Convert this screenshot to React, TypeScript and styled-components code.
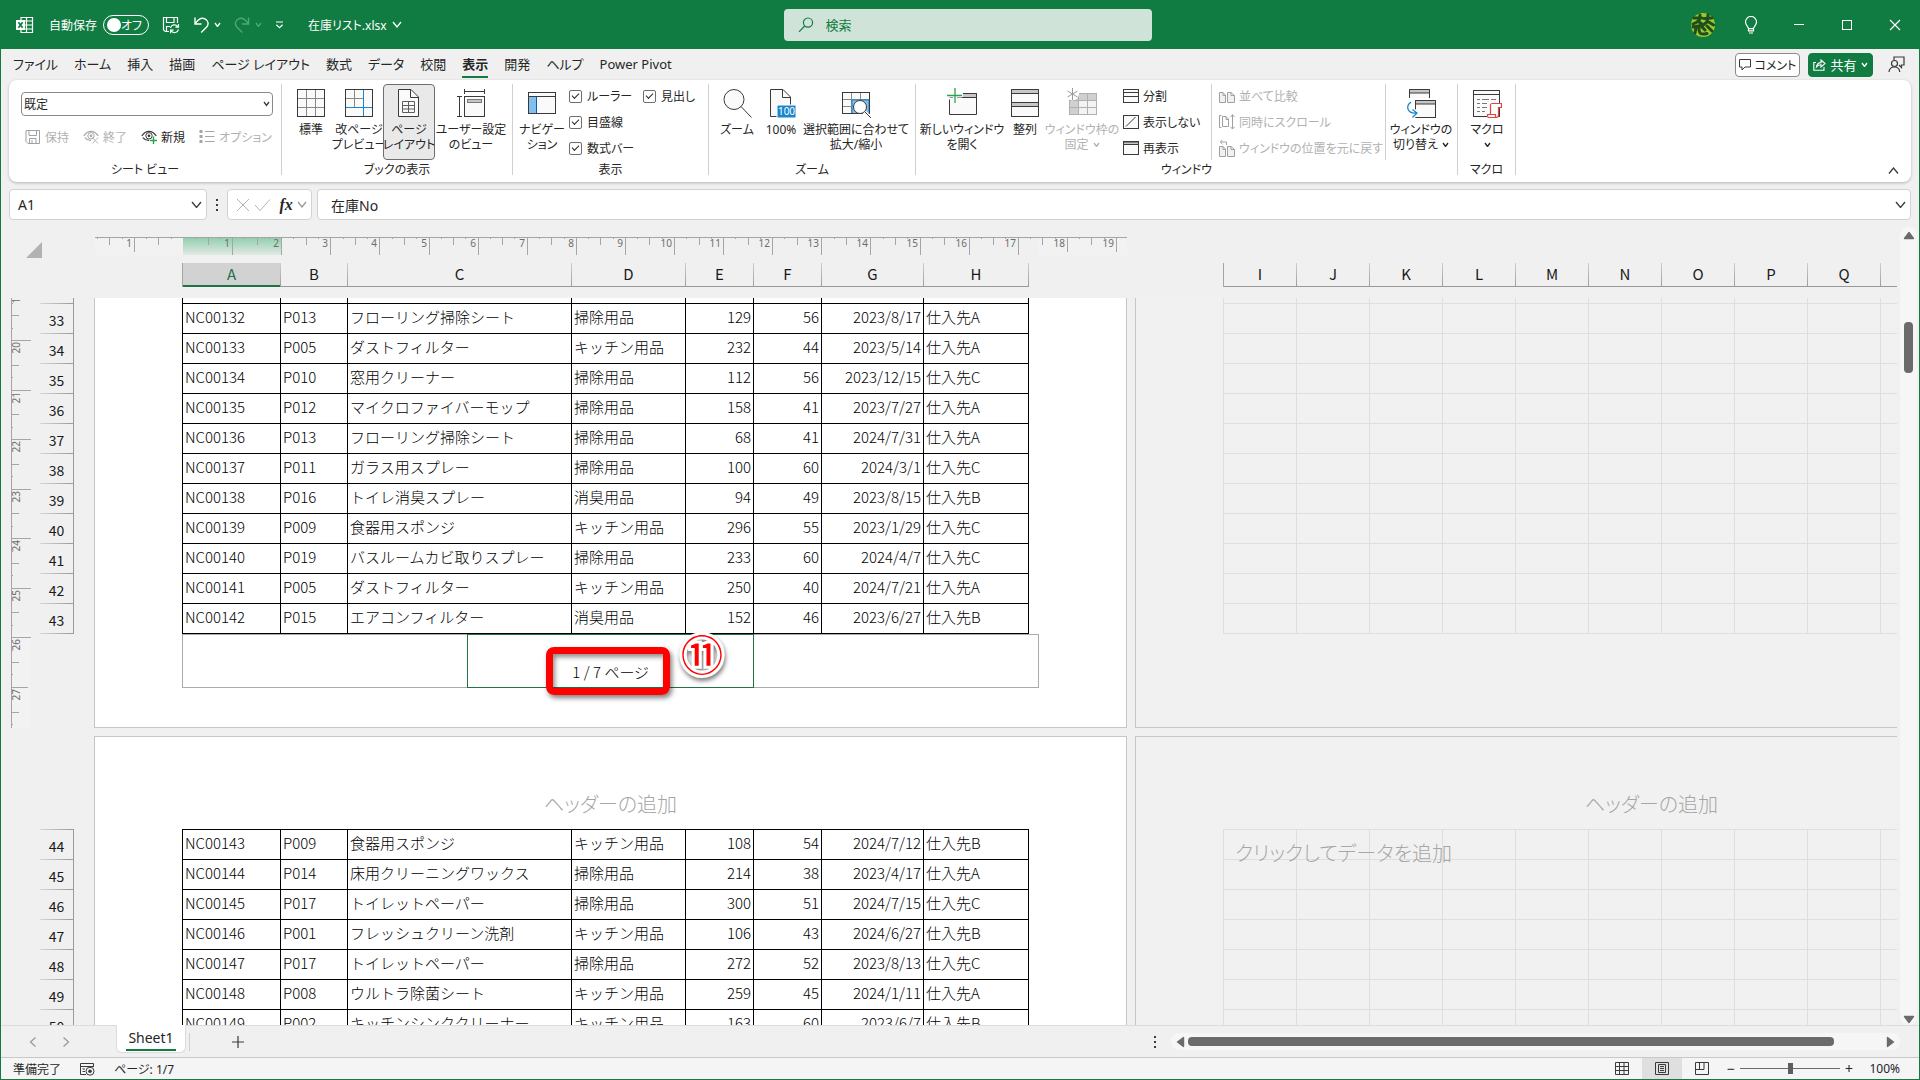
import React from "react";
import styled, { createGlobalStyle } from "styled-components";

const green = "#107c41";
const ink = "#262626";
const muted = "#b1b1b1";
const chrome = "#f0f0f0";
const uiFont = `"Noto Sans", "Noto Sans CJK JP", sans-serif`;
const cellFont = `"Noto Sans CJK JP", "Noto Sans", sans-serif`;

const GlobalStyle = createGlobalStyle`
  *, *::before, *::after { box-sizing: border-box; }
  body { margin: 0; background: ${chrome}; color: ${ink}; font-family: ${uiFont}; font-size: 12px; font-feature-settings: "palt"; }
  button, input, select { font: inherit; font-feature-settings: inherit; color: inherit; margin: 0; }
  button { border: 0; padding: 0; background: none; white-space: nowrap; }
  svg { display: block; flex: none; }
`;

/* ---------- drawings ---------- */

type DrawProps = { w?: number; h?: number; children: React.ReactNode; color?: string; sw?: number };
const Draw = ({ w = 30, h = 30, children, color = "#3a3a3a", sw = 1 }: DrawProps) => (
  <svg width={w} height={h} viewBox={`0 0 ${w} ${h}`} fill="none" stroke={color} strokeWidth={sw} aria-hidden="true">
    {children}
  </svg>
);

const Chevron = ({ w = 8, color = "#3a3a3a", up = false }: { w?: number; color?: string; up?: boolean }) => {
  const h = w / 2 + 2;
  return (
    <Draw w={w} h={h} color={color} sw={1.3}>
      <path d={up ? `M1 ${h - 1} L${w / 2} 1 L${w - 1} ${h - 1}` : `M1 1 L${w / 2} ${h - 1} L${w - 1} 1`} />
    </Draw>
  );
};

const ExcelLogo = () => (
  <Draw w={18} h={18} color="#fff" sw={1.2}>
    <path d="M5 5V1.5H16.5V16.5H5V13M10.5 1.5V16.5M5 5H16.5M9 9H16.5M5 13H16.5" />
    <path d="M0 4H9V14H0Z" fill="#fff" stroke="none" />
    <path d="M2.4 6.2L6.6 11.8M6.6 6.2L2.4 11.8" stroke={green} strokeWidth={1.7} />
  </Draw>
);
const SaveSync = () => (
  <Draw w={18} h={18} color="#fff" sw={1.2}>
    <path d="M7 15.5H3.2L1.5 13.8V1.5H15.5V7M4.5 1.5V6.5H12V1.5M4.5 15V10.5H8" />
    <path d="M8.5 12A4 4 0 0 1 15.7 10.6M16.5 8V11.2H13.4M16.5 13.4A4 4 0 0 1 9.4 15M8.6 17.2V14.2H11.6" />
  </Draw>
);
const Undo = () => (
  <Draw w={17} h={18} color="#fff" sw={1.4}>
    <path d="M2 1.5V8H8.5M2.3 7.6C5 3.6 8.8 1.3 12 2.9C16 5 15.8 9 13.2 11.6L8.2 16.6" />
  </Draw>
);
const Redo = () => (
  <Draw w={17} h={18} color="#4fa876" sw={1.4}>
    <path d="M14.5 1.5V8H8M14.2 7.6C11.5 3.6 7.7 1.3 4.5 2.9C.5 5 .7 9 3.3 11.6L8.3 16.6" />
  </Draw>
);
const Customize = () => (
  <Draw w={9} h={9} color="#fff" sw={1.2}>
    <path d="M1 2H8M1.4 4.8L4.5 7.6L7.6 4.8" />
  </Draw>
);
const SearchGlyph = () => (
  <Draw w={16} h={16} color={green} sw={1.2}>
    <circle cx="10" cy="5.6" r="4.6" />
    <path d="M6.7 9L1 14.8" />
  </Draw>
);
const Avatar = () => (
  <Draw w={24} h={24}>
    <circle cx="12" cy="12" r="12" fill="#9cc92b" stroke="none" />
    <path
      d="M3 5H11M9 2L8 8L2 11M7 8L12 12M13 5.5L21 5M17 2L16 9L11 13M16 8L22.5 12M2 14L10 12.5M5 15L4 20M8 15C8 22 11 21.5 16 20.5M11 14L14 17M16 13L21 18"
      stroke="#1f4e1c"
      strokeWidth="3"
      strokeLinecap="round"
    />
  </Draw>
);
const Bulb = () => (
  <Draw w={14} h={18} color="#fff" sw={1.2}>
    <path d="M4.5 12.6C4.3 10.4 1.5 9.3 1.5 6A5.4 5.4 0 0 1 12.5 6C12.5 9.3 9.7 10.4 9.5 12.6ZM4.5 12.6V14.8H9.5V12.6M5 17H9" />
  </Draw>
);
const Minimize = () => <Draw w={12} h={12} color="#fff"><path d="M1 5.5H11" /></Draw>;
const Maximize = () => <Draw w={12} h={12} color="#fff"><rect x="1.5" y="1.5" width="9" height="9" /></Draw>;
const Close = () => <Draw w={12} h={12} color="#fff" sw={1.2}><path d="M1 1L11 11M11 1L1 11" /></Draw>;
const CommentGlyph = () => (
  <Draw w={12} h={12}><path d="M.5 .5H11.5V8H6L3 11V8H.5Z" /></Draw>
);
const ShareGlyph = () => (
  <Draw w={13} h={13} color="#fff" sw={1.1}>
    <path d="M3 4.5H.8V12.2H11V9M3.5 8.8C4 5.6 5.6 4.6 8 4.6V2L12 5.6L8 9V6.7C6 6.7 4.8 7.2 3.5 8.8Z" />
  </Draw>
);
const PersonTalk = () => (
  <Draw w={17} h={17} sw={1.2}>
    <path d="M6 4V1H16V9H13.5V11.5L11 9" />
    <circle cx="6.5" cy="7.5" r="3" />
    <path d="M1 16C1.3 12.6 3.4 11 6.5 11C9.6 11 11.4 12.6 11.8 16" />
  </Draw>
);

const Floppy = () => (
  <Draw w={16} h={16} color="#a0a0a0">
    <path d="M1 1.5H14.5V14.5H3L1 12.5ZM4 1.5V6.5H11.5V1.5M4.5 14.5V9.5H11V14.5M7 11V14.5" />
  </Draw>
);
const EyeShape = ({ color }: { color: string }) => (
  <>
    <path d="M.8 7C3 3.6 5.4 2.4 8 2.4S13 3.6 15.2 7M1.8 8.6C4 11 6 11.6 8 11.4" stroke={color} strokeWidth="1.3" />
    <circle cx="8" cy="6.8" r="3.2" stroke={color} />
    <circle cx="8" cy="6.8" r="1.4" fill={color} stroke="none" />
  </>
);
const EyeExit = () => (
  <Draw w={16} h={16} color="#b9b9b9"><EyeShape color="#a9a9a9" /><path d="M9.5 8.5L15 14.5M15 8.5L9.5 14.5" /></Draw>
);
const EyeNew = () => (
  <Draw w={16} h={16}><EyeShape color="#3a3a3a" /><path d="M12.5 7.5V15M8.8 11.5H16" stroke="#2ba24c" strokeWidth="1.4" /></Draw>
);
const Bullets = () => (
  <Draw w={16} h={16} color="#a6a6a6">
    <path d="M.5 2.5H3.5M.5 7.5H3.5M.5 12.5H3.5" strokeWidth="3" />
    <path d="M6 2.5H15.5M6 7.5H15.5M6 12.5H15.5" />
  </Draw>
);

const NormalView = () => (
  <Draw>
    <rect x="1.5" y="1.5" width="27" height="27" fill="#fafafa" />
    <path d="M10.5 2V28M19.5 2V28M2 10.5H28M2 19.5H28" stroke="#8a8886" />
    <rect x="1.5" y="1.5" width="27" height="27" />
  </Draw>
);
const PageBreak = () => (
  <Draw>
    <rect x="1.5" y="1.5" width="27" height="27" fill="#fafafa" />
    <path d="M10.5 2V19M2 10.5H19" stroke="#8a8886" />
    <path d="M19.5 2V28M2 19.5H28" stroke="#1a86cc" />
  </Draw>
);
const PageLayout = () => (
  <Draw>
    <path d="M4.5 1.5H17L24.5 9V28.5H4.5Z" fill="#fafafa" />
    <path d="M16.5 1.5V9.5H24.5" />
    <path d="M8.5 13.5H20.5V24.5H8.5ZM14.5 13.5V24.5M8.5 17.5H20.5M8.5 21H20.5" stroke="#605e5c" />
  </Draw>
);
const CustomView = () => (
  <Draw>
    <path d="M8.5 1V6M28.5 1V6M8.5 3.5H28.5M1 8.5H6M1 28.5H6M3.5 8.5V28.5" />
    <rect x="8.5" y="8.5" width="20" height="20" fill="#fafafa" />
    <rect x="11.5" y="11.5" width="14" height="3" fill="#c8c6c4" stroke="#797775" />
  </Draw>
);
const NavPane = () => (
  <Draw>
    <rect x="1.5" y="4.5" width="27" height="21" fill="#fafafa" />
    <rect x="2" y="9" width="7" height="16" fill="#83beec" stroke="none" />
    <path d="M9.5 9V25" stroke="#0063b1" />
    <path d="M1.5 8.5H28.5" />
  </Draw>
);
const Magnifier = () => (
  <Draw><circle cx="12" cy="11.5" r="10" fill="#fafafa" /><path d="M19 18.5L29.5 29.5" /></Draw>
);
const Zoom100 = () => (
  <Draw>
    <path d="M4.5 1.5H17L24.5 9V28.5H4.5Z" fill="#fafafa" />
    <path d="M16.5 1.5V9.5H24.5" />
    <rect x="11" y="17" width="19" height="13" fill="#1a86cc" stroke="#fff" />
    <text x="20.5" y="27" textAnchor="middle" fontSize="10" fill="#fff" stroke="none">100</text>
  </Draw>
);
const ZoomSelection = () => (
  <Draw w={30} h={30}>
    <rect x="1.5" y="4.5" width="27" height="21" fill="#fafafa" />
    <path d="M10.5 5V25M19.5 5V12M2 11.5H28M2 18.5H11" stroke="#8a8886" />
    <rect x="11" y="12" width="17" height="13.5" fill="#83beec" stroke="#1a86cc" />
    <path d="M1.5 4.5H28.5V25.5H1.5Z" />
    <path d="M23 24L30 30" stroke="#fff" strokeWidth="4" />
    <circle cx="19" cy="19" r="6.5" fill="#fff" stroke="#3a3a3a" />
    <path d="M23.8 23.8L30 30" />
  </Draw>
);
const NewWindow = () => (
  <Draw w={30}>
    <path d="M2.5 11.5V26.5H29.5V5.5H17M2.5 9.5H29.5" fill="#fafafa" />
    <path d="M16 6H29V9.5H16Z" fill="#c8c6c4" stroke="none" />
    <path d="M16 5.5H29.5V9.5H16" />
    <path d="M8 0V15M0 7.5H15" stroke="#fff" strokeWidth="4" />
    <path d="M8 0V15M0 7.5H15" stroke="#2ba24c" strokeWidth="1.3" />
  </Draw>
);
const Arrange = () => (
  <Draw>
    <rect x="1.5" y="1.5" width="27" height="27" fill="#fafafa" />
    <path d="M1.5 1.5H28.5V5.5H1.5ZM1.5 14.5H28.5V18.5H1.5Z" fill="#c8c6c4" />
  </Draw>
);
const Freeze = () => (
  <Draw color="#9a9a9a">
    <rect x="2.5" y="5.5" width="27" height="21" fill="#f3f3f3" />
    <path d="M2.5 5.5H11.5V26.5H2.5ZM11.5 5.5H29.5V12.5H11.5Z" fill="#d0d0d0" stroke="none" />
    <path d="M11.5 5.5V26.5M20.5 5.5V26.5M2.5 12.5H29.5M2.5 19.5H29.5M2.5 5.5H29.5V26.5H2.5Z" stroke="#b0b0b0" />
    <circle cx="5.5" cy="6" r="6.5" fill="#fff" stroke="none" />
    <path d="M5.5 0V12M.5 3L10.5 9M10.5 3L.5 9" />
  </Draw>
);
const SplitWin = () => (
  <Draw w={16} h={16}><rect x=".5" y="1.5" width="15" height="13" fill="#fafafa" /><path d="M.5 4.5H15.5M.5 8.5H15.5" /></Draw>
);
const HideWin = () => (
  <Draw w={16} h={16}><rect x=".5" y="1.5" width="15" height="13" fill="#fafafa" /><path d="M3 12.5L12.5 3" /></Draw>
);
const ShowWin = () => (
  <Draw w={16} h={16}><rect x=".5" y="1.5" width="15" height="13" fill="#fafafa" /><path d="M.5 2H15.5V4.5H.5Z" fill="#c8c6c4" /></Draw>
);
const twoPages = "M.5 4.5H4L6.5 7V14.5H.5ZM8.5 4.5H12L15.5 7.5V14.5H8.5ZM4 4.5V7.5H6.5M12 4.5V7.5H15.5";
const SideBySide = () => <Draw w={16} h={16} color="#a0a0a0"><path d={twoPages} fill="#f1f1f1" /></Draw>;
const SyncScroll = () => (
  <Draw w={16} h={16} color="#a0a0a0">
    <path d="M2.5 1.5H.5V13.5H2.5M3.5 2.5H7L9.5 5V12.5H3.5ZM7 2.5V5.5H9.5M13.5 .5V15M11.5 3L13.5 .8L15.5 3M11.5 12.8L13.5 15L15.5 12.8" />
  </Draw>
);
const ResetPos = () => (
  <Draw w={16} h={18} color="#a0a0a0">
    <path d="M.5 7.5H4L6.5 10V17.5H.5ZM8.5 7.5H12L15.5 10.5V17.5H8.5ZM4 7.5V10.5H6.5M12 7.5V10.5H15.5" fill="#f1f1f1" />
    <path d="M7.5 6V3H1.5M3.5 .8L1.3 3L3.5 5.2" />
  </Draw>
);
const SwitchWin = () => (
  <Draw>
    <path d="M3.5 10V1.5H23.5V10" fill="#fafafa" />
    <path d="M3.5 1.5H23.5V5H3.5Z" fill="#c8c6c4" />
    <rect x="9.5" y="12.5" width="20" height="17" fill="#fafafa" />
    <path d="M9.5 12.5H29.5V16H9.5Z" fill="#c8c6c4" />
    <path d="M5 14C-.5 18 1 25.5 10 25M6.5 21.5L11 25L6.5 29.5" stroke="#fff" strokeWidth="4" />
    <path d="M5 14C-.5 18 1 25.5 10 25M6.5 21.5L11 25L6.5 29.5" stroke="#1a86cc" strokeWidth="1.3" />
  </Draw>
);
const Macro = () => (
  <Draw>
    <rect x="1.5" y="2.5" width="26" height="26" fill="#fafafa" />
    <path d="M1.5 6.5H27.5" />
    <path d="M5 11.5H8M10 11.5H17M19 11.5H24M5 15.5H8M10 15.5H15M5 19.5H8M10 19.5H15M5 23.5H8M10 23.5H13" stroke="#797775" />
    <path d="M18 15.5H28.5V20H26V30H15V26.5H18Z" fill="#fff" stroke="none" />
    <path d="M18.5 26V17.5Q18.5 15.5 20 15.5H29.5V19.5H26.5V27Q26.5 29.5 24 29.5H16.5Q15.5 29.5 15.5 26.5H23.5V29" stroke="#e8403f" strokeWidth="1.2" />
  </Draw>
);
const CancelX = () => <Draw w={14} h={14} color="#b3b3b3"><path d="M1 1L13 13M13 1L1 13" /></Draw>;
const EnterCheck = () => <Draw w={17} h={14} color="#b3b3b3"><path d="M1 7L6 12.5L16 1.5" /></Draw>;
const Dots = () => (
  <Draw w={4} h={14}><path d="M2 1V3M2 6V8M2 11V13" strokeWidth="2" /></Draw>
);
const Corner = () => <Draw w={16} h={16}><path d="M16 0V16H0Z" fill="#b2b2b2" stroke="none" /></Draw>;
const Plus = () => <Draw w={12} h={12} sw={1.2}><path d="M6 0V12M0 6H12" /></Draw>;
const NavArrow = ({ flip }: { flip?: boolean }) => (
  <Draw w={8} h={12} color="#9a9a9a" sw={1.3}><path d={flip ? "M1.5 1.5L6.5 6L1.5 10.5" : "M6.5 1.5L1.5 6L6.5 10.5"} /></Draw>
);
const Triangle = ({ d, w, h }: { d: string; w: number; h: number }) => (
  <Draw w={w} h={h} color="#6b6b6b" sw={1.4}><path d={d} fill="#6b6b6b" strokeLinejoin="round" /></Draw>
);
const MacroRecord = () => (
  <Draw w={15} h={14}>
    <path d="M6 12.5H.5V1.5H13.5V5M.5 4.5H13.5M2.5 7H5M2.5 9.5H5" />
    <circle cx="10" cy="9.2" r="4" /><circle cx="10" cy="9.2" r="1.8" fill="#3a3a3a" stroke="none" />
  </Draw>
);
const StatusGrid = () => (
  <Draw w={14} h={14}><path d="M.5 .5H13.5V12.5H.5ZM4.5 .5V12.5M9 .5V12.5M.5 4.5H13.5M.5 8.5H13.5" /></Draw>
);
const StatusPage = () => (
  <Draw w={14} h={14}><path d="M.5 .5H13.5V12.5H.5ZM3.5 2.5H10.5V10.5H3.5ZM5 4.5H9M5 6.5H9M5 8.5H9" /></Draw>
);
const StatusBreak = () => (
  <Draw w={14} h={14}><path d="M.5 .5H13.5V12.5H.5ZM4.5 .5V7.5M.5 7.5H9V.5" /></Draw>
);

/* ---------- rulers ---------- */

const CM = 49.1;

const HorizontalRuler = () => {
  const zero = 88;
  const marks = Array.from({ length: 84 }, (_, i) => i - 7).map((q) => ({ q, x: Math.round(zero + (q * CM) / 4) }));
  return (
    <svg width="1032" height="18" fontSize="10" fill="#6d6d6d" aria-label="水平ルーラー">
      <defs>
        <linearGradient id="selected" x1="0" y1="0" x2="0" y2="1">
          <stop offset="0" stopColor="#93cfae" />
          <stop offset="1" stopColor="#e2e9e5" />
        </linearGradient>
      </defs>
      <rect width="88" height="18" fill="#f2f2f2" />
      <rect x="943" width="89" height="18" fill="#f2f2f2" />
      <rect x="88" y="1" width="98" height="17" fill="url(#selected)" />
      <path d="M0 .5H1032" stroke="#a5a5a5" />
      {marks.filter((m) => m.q !== 0 && m.x > 0 && m.x < 1032).map(({ q, x }) => {
        const margin = x < 88 || x > 943;
        const end = q % 4 === 0 ? (margin ? 15 : 18) : q % 2 === 0 ? 8 : 2;
        return (
          <g key={q}>
            <path d={`M${x + 0.5} 1V${end}`} stroke="#a5a5a5" />
            {q % 4 === 0 && <text x={x - 2} y="10" textAnchor="end">{Math.abs(q / 4)}</text>}
          </g>
        );
      })}
    </svg>
  );
};

const VerticalRuler = () => {
  const first = -7.6;
  const marks = Array.from({ length: 36 }, (_, i) => ({ q: i, y: Math.round(first + (i * 49.55) / 4) }));
  return (
    <svg width="20" height="430" fontSize="10" fill="#6d6d6d" aria-label="垂直ルーラー">
      <rect y="336" width="20" height="94" fill="#f2f2f2" />
      <path d="M.5 0V430" stroke="#a5a5a5" />
      {marks.map(({ q, y }) => (
        <g key={q}>
          <path d={`M1 ${y + 0.5}H${q % 4 === 0 ? (y > 350 ? 17 : 20) : q % 2 === 0 ? 8 : 2}`} stroke="#a5a5a5" />
          {q % 4 === 0 && (
            <text transform={`translate(9 ${y + 2}) rotate(-90)`} textAnchor="end">{19 + q / 4}</text>
          )}
        </g>
      ))}
    </svg>
  );
};

/* ---------- frame ---------- */

const Window = styled.div`
  height: 100vh;
  display: flex;
  flex-direction: column;
  border: 1px solid ${green};
  border-top: 0;
  overflow: hidden;
`;

const TitleBar = styled.header`
  flex: none;
  height: 49px;
  display: grid;
  grid-template-columns: 1fr 368px 1fr;
  align-items: center;
  padding-left: 15px;
  background: ${green};
  color: #fff;
`;
const TitleLeft = styled.div`
  display: flex;
  align-items: center;
  gap: 13px;
`;
const Split = styled.div<{ $gap?: number }>`
  display: flex;
  align-items: center;
  gap: ${(p) => p.$gap ?? 4}px;
`;
const AutoSave = styled.label`
  display: flex;
  align-items: center;
  gap: 6px;
  margin-left: 2px;
`;
const Toggle = styled.button`
  width: 46px;
  height: 20px;
  border: 1px solid #fff;
  border-radius: 10px;
  display: flex;
  align-items: center;
  justify-content: space-between;
  padding: 0 6px 0 3px;
  &::before {
    content: "";
    width: 14px;
    height: 14px;
    border-radius: 50%;
    background: #fff;
  }
`;
const FileName = styled.button`
  display: flex;
  align-items: center;
  gap: 5px;
  margin-left: 11px;
`;
const SearchBox = styled.label`
  height: 32px;
  display: flex;
  align-items: center;
  gap: 12px;
  padding: 0 14px;
  border-radius: 4px;
  background: #cfe3d8;
`;
const SearchInput = styled.input`
  flex: 1;
  border: 0;
  padding: 0;
  outline: 0;
  background: none;
  font-size: 13px;
  &::placeholder { color: ${green}; opacity: 1; }
`;
const TitleRight = styled.div`
  display: flex;
  align-items: center;
  justify-content: flex-end;
`;
const WindowButton = styled.button<{ $w?: number }>`
  width: ${(p) => p.$w ?? 48}px;
  height: 48px;
  display: grid;
  place-items: center;
`;

const TabRow = styled.nav`
  flex: none;
  height: 31px;
  display: flex;
  align-items: center;
  padding: 0 14px 0 12px;
  gap: 16px;
  font-size: 13px;
`;
const MenuTab = styled.button<{ $active?: boolean }>`
  height: 27px;
  font-weight: ${(p) => (p.$active ? 700 : 400)};
  border-bottom: 2px solid ${(p) => (p.$active ? green : "transparent")};
`;
const TabActions = styled.div`
  margin-left: auto;
  display: flex;
  align-items: center;
  gap: 8px;
`;
const Outlined = styled.button`
  height: 24px;
  min-width: 65px;
  display: flex;
  align-items: center;
  justify-content: center;
  gap: 4px;
  border: 1px solid #8a8a8a;
  border-radius: 4px;
  background: #fff;
  font-size: 12px;
`;
const Filled = styled(Outlined)`
  border-color: ${green};
  background: ${green};
  color: #fff;
  font-size: 13px;
  margin-right: 7px;
`;

/* ---------- ribbon ---------- */

const Ribbon = styled.section`
  flex: none;
  height: 102px;
  margin: 0 8px;
  padding: 4px 0;
  display: flex;
  background: #fff;
  border-radius: 8px;
  box-shadow: 0 1px 3px rgba(0, 0, 0, 0.25);
`;
const Group = styled.div<{ $w: number }>`
  width: ${(p) => p.$w}px;
  display: flex;
  flex-direction: column;
  border-right: 1px solid #d0d0d0;
  height: 91px;
`;
const GroupBody = styled.div<{ $pad?: number }>`
  height: 76px;
  flex: none;
  display: flex;
  padding-left: ${(p) => p.$pad ?? 6}px;
`;
const GroupTitle = styled.div`
  line-height: 20px;
  text-align: center;
`;
const BigButton = styled.button<{ $w: number; $active?: boolean; $off?: boolean }>`
  width: ${(p) => p.$w}px;
  height: 76px;
  padding-top: 3px;
  display: flex;
  flex-direction: column;
  align-items: center;
  gap: 4px;
  line-height: 15px;
  border-radius: 4px;
  border: 1px solid ${(p) => (p.$active ? "#6e6e6e" : "transparent")};
  background: ${(p) => (p.$active ? "#e9e9e9" : "none")};
  color: ${(p) => (p.$off ? muted : ink)};
`;
const Caption = styled.span`
  display: flex;
  flex-direction: column;
  align-items: center;
`;
const CaptionLine = styled.span`
  display: flex;
  align-items: center;
  gap: 4px;
  min-height: 15px;
`;
const SheetViews = styled.div`
  height: 76px;
  flex: none;
  display: flex;
  flex-direction: column;
  gap: 10px;
  padding: 8px 8px 0 12px;
`;
const SelectWrap = styled.div`
  display: grid;
  align-items: center;
  & > * { grid-area: 1 / 1; }
  & > svg { justify-self: end; margin-right: 3px; pointer-events: none; }
`;
const ViewSelect = styled.select`
  appearance: none;
  width: 100%;
  height: 24px;
  padding: 0 2px;
  border: 1px solid #8a8a8a;
  border-radius: 4px;
  background: #fff;
`;
const SmallRow = styled.div`
  display: flex;
  gap: 14px;
  padding-left: 4px;
`;
const SmallButton = styled.button<{ $off?: boolean }>`
  height: 22px;
  display: flex;
  align-items: center;
  gap: 4px;
  color: ${(p) => (p.$off ? muted : ink)};
`;
const SmallStack = styled.div<{ $w: number; $rule?: boolean }>`
  width: ${(p) => p.$w}px;
  height: 76px;
  display: flex;
  flex-direction: column;
  gap: 4px;
  padding: 1px 0 0 7px;
  border-right: ${(p) => (p.$rule ? "1px solid #d0d0d0" : "0")};
`;
const Checks = styled.div`
  display: grid;
  grid-template-columns: 74px 64px;
  grid-template-rows: repeat(3, 26px);
  padding-left: 4px;
  align-items: start;
`;
const CheckLabel = styled.label`
  display: flex;
  align-items: center;
  gap: 5px;
  height: 24px;
  white-space: nowrap;
`;
const CheckBox = styled.input`
  appearance: none;
  width: 13px;
  height: 13px;
  border: 1px solid #6e6e6e;
  border-radius: 2px;
  display: grid;
  place-items: center;
  &:checked::before {
    content: "";
    width: 7px;
    height: 4px;
    border-left: 1px solid ${ink};
    border-bottom: 1px solid ${ink};
    transform: translateY(-1px) rotate(-45deg);
  }
`;
const Collapse = styled.button`
  margin-left: auto;
  align-self: flex-end;
  padding: 0 12px 4px;
`;

/* ---------- formula bar ---------- */

const FormulaBar = styled.div`
  flex: none;
  display: flex;
  align-items: center;
  margin: 7px 8px 0;
  height: 31px;
`;
const Field = styled.div<{ $w?: number }>`
  ${(p) => (p.$w ? `width: ${p.$w}px;` : "flex: 1;")}
  height: 31px;
  display: flex;
  align-items: center;
  justify-content: space-between;
  padding: 0 4px 0 8px;
  border: 1px solid #d2d2d2;
  border-radius: 4px;
  background: #fff;
`;
const FieldInput = styled.input<{ $indent?: number }>`
  flex: 1;
  min-width: 0;
  border: 0;
  outline: 0;
  background: none;
  padding: 0 0 0 ${(p) => p.$indent ?? 0}px;
  font-size: 14px;
`;
const DotGap = styled.div`
  width: 20px;
  display: grid;
  place-items: center;
`;
const Fx = styled.span`
  font: italic 700 16px "Liberation Serif", serif;
  padding-left: 4px;
`;
const FormulaGap = styled.div`
  width: 5px;
`;

/* ---------- worksheet ---------- */

const Workspace = styled.main`
  flex: 1;
  min-height: 0;
  display: flex;
`;
const Canvas = styled.div`
  flex: 1;
  min-width: 0;
  display: flex;
  flex-direction: column;
  overflow: hidden;
`;
const RulerRow = styled.div`
  flex: none;
  height: 43px;
  display: flex;
  padding-top: 17px;
`;
const CornerCell = styled.div`
  width: 94px;
  flex: none;
  padding: 5px 0 0 25px;
`;
const HeadRow = styled.div`
  flex: none;
  display: flex;
  height: 24px;
  margin-bottom: 11px;
  padding-left: 181px;
  font: 15px/22px ${cellFont};
`;
const HeadSet = styled.div`
  display: flex;
  flex: none;
  margin-right: 194px;
  border-left: 1px solid #a5a5a5;
`;
const Head = styled.div<{ $w: number; $active?: boolean }>`
  width: ${(p) => p.$w}px;
  text-align: center;
  border-right: 1px solid;
  border-image: linear-gradient(#d0d0d0, #999) 1;
  box-shadow: inset 0 ${(p) => (p.$active ? "-2px" : "-1px")} 0 ${(p) => (p.$active ? "#217346" : "#999")};
  background: ${(p) => (p.$active ? "#d2d2d2" : "none")};
  color: ${(p) => (p.$active ? "#217346" : "#1a1a1a")};
`;
const Body = styled.div`
  flex: 1;
  min-height: 0;
  display: flex;
  overflow: hidden;
`;
const Gutter = styled.div`
  flex: none;
  width: 93px;
  display: flex;
  padding-left: 10px;
`;
const RowNumbers = styled.div`
  width: 34px;
  margin-left: 9px;
`;
const RowNumberGap = styled.div`
  height: 195px;
`;
const RowNumberTop = styled.div<{ $h: number }>`
  height: ${(p) => p.$h}px;
  border-right: 1px solid #999;
  border-bottom: 1px solid;
  border-image: linear-gradient(90deg, #d8d8d8, #999) 1;
`;
const RowNumber = styled.div`
  height: 30px;
  border-right: 1px solid;
  border-bottom: 1px solid;
  border-image: linear-gradient(90deg, #d8d8d8, #999) 1;
  font: 14px/33px ${cellFont};
  text-align: center;
  color: #1a1a1a;
`;
const PageColumn = styled.div`
  flex: none;
  width: 1033px;
  margin-right: 8px;
`;
const Page = styled.div<{ $first?: boolean; $blank?: boolean }>`
  height: ${(p) => (p.$first ? "430px" : "auto")};
  min-height: 380px;
  margin-bottom: 8px;
  padding-left: 87px;
  border: 1px solid #c6c6c6;
  border-top-width: ${(p) => (p.$first ? 0 : 1)}px;
  background: ${(p) => (p.$blank ? "#f1f1f1" : "#fff")};
`;
const Sheet = styled.table<{ $top?: boolean }>`
  table-layout: fixed;
  width: 847px;
  border-collapse: separate;
  border-spacing: 0;
  border-left: 1px solid #000;
  border-top: ${(p) => (p.$top ? "1px solid #000" : "0")};
  font: 15px/20px ${cellFont};
  font-weight: 300;
  font-feature-settings: normal;
  color: #000;
`;
const Cell = styled.td<{ $num?: boolean }>`
  height: 30px;
  padding: 0 2px 4px;
  overflow: hidden;
  white-space: nowrap;
  border-right: 1px solid #000;
  border-bottom: 1px solid #000;
  text-align: ${(p) => (p.$num ? "right" : "left")};
`;
const EdgeCell = styled(Cell)`
  height: 6px;
`;
const PageFooter = styled.div`
  width: 857px;
  height: 54px;
  display: grid;
  grid-template-columns: 284px 287px 284px;
  border: 1px solid #ababab;
`;
const FooterMiddle = styled.div`
  grid-column: 2;
  margin: -1px 0;
  border: 1px solid #217346;
  position: relative;
  display: flex;
  align-items: flex-end;
  justify-content: center;
  padding-bottom: 5px;
  font: 15px/20px ${cellFont};
  font-weight: 300;
  font-feature-settings: "palt";
  color: #000;
`;
const RedFrame = styled.div`
  position: absolute;
  left: 78px;
  top: 12px;
  width: 124px;
  height: 48px;
  border: 7px solid #f00;
  border-radius: 8px;
  box-shadow: 2px 3px 5px rgba(0, 0, 0, 0.5), inset 2px 3px 5px rgba(0, 0, 0, 0.45);
`;
const StepBadge = styled.div`
  position: absolute;
  left: 211px;
  top: -6px;
  width: 46px;
  height: 48px;
  font: 500 42px/48px ${cellFont};
  text-align: center;
  color: #f00;
  -webkit-text-stroke: 6px #fff;
  paint-order: stroke fill;
  filter: drop-shadow(1px 3px 2px rgba(0, 0, 0, 0.5));
`;
const PageHeader = styled.div`
  width: 857px;
  height: 92px;
  padding-top: 52px;
  text-align: center;
  font: 300 20px/30px ${cellFont};
  font-feature-settings: "palt";
  color: #a6a6a6;
`;
const BlankGrid = styled.div<{ $h: number; $shift?: number }>`
  width: 945px;
  height: ${(p) => p.$h}px;
  padding: 9px 12px;
  font: 300 20px/30px ${cellFont};
  font-feature-settings: "palt";
  color: #a6a6a6;
  background-image: linear-gradient(90deg, #dedede 1px, transparent 1px), linear-gradient(#dedede 1px, transparent 1px);
  background-size: 73px 30px;
  background-position: 0 ${(p) => p.$shift ?? 0}px;
`;
const VScroll = styled.div`
  flex: none;
  width: 17px;
  margin: 7px 2px 0 3px;
  display: flex;
  flex-direction: column;
  align-items: center;
  padding: 4px 0 1px;
  border-radius: 8px;
  background: #f6f6f6;
`;
const VThumb = styled.div`
  width: 9px;
  height: 51px;
  margin: 82px 0 auto;
  border-radius: 4px;
  background: #6b6b6b;
`;

/* ---------- bottom bars ---------- */

const SheetBar = styled.div`
  flex: none;
  height: 32px;
  display: flex;
  border-top: 1px solid #dcdcdc;
  padding-left: 27px;
  align-items: center;
`;
const SheetNav = styled.button`
  width: 33px;
  padding-left: 1px;
`;
const SheetTab = styled.button`
  align-self: flex-start;
  height: 28px;
  margin: -1px 3px 0 22px;
  width: 70px;
  padding: 0 9px;
  border: 1px solid #dcdcdc;
  border-top-color: #fff;
  border-radius: 0 0 6px 6px;
  background: #fff;
  font-size: 14px;
  line-height: 22px;
`;
const TabUnderline = styled.span`
  display: block;
  border-bottom: 2px solid ${green};
`;
const TabRule = styled.div`
  width: 1px;
  height: 18px;
  margin-right: 42px;
  background: #d0d0d0;
`;
const HScroll = styled.div`
  margin: 0 19px 0 14px;
  width: 729px;
  height: 17px;
  display: flex;
  align-items: center;
  padding: 0 5px;
  gap: 3px;
  border-radius: 8px;
  background: #f6f6f6;
`;
const HThumb = styled.div`
  width: 646px;
  height: 9px;
  margin-right: auto;
  border-radius: 4px;
  background: #6b6b6b;
`;
const Spacer = styled.div`
  flex: 1;
`;
const StatusBar = styled.footer`
  flex: none;
  height: 22px;
  display: flex;
  align-items: center;
  padding: 0 19px 0 12px;
  gap: 19px;
  border-top: 1px solid #c8c8c8;
  background: #f5f5f5;
  white-space: nowrap;
`;
const StatusRight = styled.div`
  margin-left: auto;
  display: flex;
  align-items: center;
`;
const StatusButton = styled.button<{ $active?: boolean }>`
  width: 40px;
  height: 21px;
  display: grid;
  place-items: center;
  background: ${(p) => (p.$active ? "#dfdfdf" : "none")};
`;
const ZoomStep = styled.button`
  width: 18px;
  font-size: 14px;
  line-height: 18px;
`;
const ZoomRange = styled.input`
  appearance: none;
  width: 100px;
  height: 12px;
  background: linear-gradient(#6b6b6b, #6b6b6b) center / 100% 1px no-repeat;
  &::-webkit-slider-thumb {
    appearance: none;
    width: 5px;
    height: 11px;
    background: #5e5e5e;
  }
`;
const ZoomValue = styled.span`
  width: 42px;
  text-align: right;
`;

/* ---------- data ---------- */

const columns = [
  { id: "A", w: 98 }, { id: "B", w: 67 }, { id: "C", w: 224 }, { id: "D", w: 114 },
  { id: "E", w: 68 }, { id: "F", w: 68 }, { id: "G", w: 102 }, { id: "H", w: 105 },
];
const emptyColumns = ["I", "J", "K", "L", "M", "N", "O", "P", "Q", ""];

type Row = [string, string, string, string, number, number, string, string];
const firstPage: Row[] = [
  ["NC00132", "P013", "フローリング掃除シート", "掃除用品", 129, 56, "2023/8/17", "仕入先A"],
  ["NC00133", "P005", "ダストフィルター", "キッチン用品", 232, 44, "2023/5/14", "仕入先A"],
  ["NC00134", "P010", "窓用クリーナー", "掃除用品", 112, 56, "2023/12/15", "仕入先C"],
  ["NC00135", "P012", "マイクロファイバーモップ", "掃除用品", 158, 41, "2023/7/27", "仕入先A"],
  ["NC00136", "P013", "フローリング掃除シート", "掃除用品", 68, 41, "2024/7/31", "仕入先A"],
  ["NC00137", "P011", "ガラス用スプレー", "掃除用品", 100, 60, "2024/3/1", "仕入先C"],
  ["NC00138", "P016", "トイレ消臭スプレー", "消臭用品", 94, 49, "2023/8/15", "仕入先B"],
  ["NC00139", "P009", "食器用スポンジ", "キッチン用品", 296, 55, "2023/1/29", "仕入先C"],
  ["NC00140", "P019", "バスルームカビ取りスプレー", "掃除用品", 233, 60, "2024/4/7", "仕入先C"],
  ["NC00141", "P005", "ダストフィルター", "キッチン用品", 250, 40, "2024/7/21", "仕入先A"],
  ["NC00142", "P015", "エアコンフィルター", "消臭用品", 152, 46, "2023/6/27", "仕入先B"],
];
const secondPage: Row[] = [
  ["NC00143", "P009", "食器用スポンジ", "キッチン用品", 108, 54, "2024/7/12", "仕入先B"],
  ["NC00144", "P014", "床用クリーニングワックス", "掃除用品", 214, 38, "2023/4/17", "仕入先A"],
  ["NC00145", "P017", "トイレットペーパー", "掃除用品", 300, 51, "2024/7/15", "仕入先C"],
  ["NC00146", "P001", "フレッシュクリーン洗剤", "キッチン用品", 106, 43, "2024/6/27", "仕入先B"],
  ["NC00147", "P017", "トイレットペーパー", "掃除用品", 272, 52, "2023/8/13", "仕入先C"],
  ["NC00148", "P008", "ウルトラ除菌シート", "キッチン用品", 259, 45, "2024/1/11", "仕入先A"],
  ["NC00149", "P002", "キッチンシンククリーナー", "キッチン用品", 163, 60, "2023/6/7", "仕入先B"],
];

const StockTable = ({ rows, edge }: { rows: Row[]; edge?: boolean }) => (
  <Sheet $top={!edge}>
    <colgroup>
      {columns.map((c) => <col key={c.id} width={c.w} />)}
    </colgroup>
    <tbody>
      {edge && <tr>{columns.map((c) => <EdgeCell key={c.id} />)}</tr>}
      {rows.map((row) => (
        <tr key={row[0]}>
          {row.map((value, i) => <Cell key={i} $num={i >= 4 && i <= 6}>{value}</Cell>)}
        </tr>
      ))}
    </tbody>
  </Sheet>
);

type BigProps = { icon: React.ReactNode; lines: string[]; w: number; active?: boolean; off?: boolean; menu?: boolean };
const Big = ({ icon, lines, w, active, off, menu }: BigProps) => (
  <BigButton $w={w} $active={active} $off={off}>
    {icon}
    <Caption>
      {lines.map((line, i) => (
        <CaptionLine key={i}>
          {line}
          {menu && i === lines.length - 1 && <Chevron w={7} color={off ? muted : ink} />}
        </CaptionLine>
      ))}
    </Caption>
  </BigButton>
);

const Small = ({ icon, text, off }: { icon: React.ReactNode; text: string; off?: boolean }) => (
  <SmallButton $off={off}>{icon}{text}</SmallButton>
);

const Check = ({ text }: { text: string }) => (
  <CheckLabel><CheckBox type="checkbox" defaultChecked />{text}</CheckLabel>
);

const menuTabs = ["ファイル", "ホーム", "挿入", "描画", "ページ レイアウト", "数式", "データ", "校閲", "表示", "開発", "ヘルプ", "Power Pivot"];

export default function App() {
  return (
    <Window>
      <GlobalStyle />
      <TitleBar>
        <TitleLeft>
          <ExcelLogo />
          <AutoSave>自動保存<Toggle role="switch" aria-checked="false">オフ</Toggle></AutoSave>
          <button aria-label="上書き保存"><SaveSync /></button>
          <Split><button aria-label="元に戻す"><Undo /></button><Chevron w={7} color="#fff" /></Split>
          <Split><button aria-label="やり直し"><Redo /></button><Chevron w={7} color="#4fa876" /></Split>
          <button aria-label="クイック アクセス"><Customize /></button>
          <FileName>在庫リスト.xlsx<Chevron w={10} color="#fff" /></FileName>
        </TitleLeft>
        <SearchBox>
          <SearchGlyph />
          <SearchInput placeholder="検索" aria-label="検索" />
        </SearchBox>
        <TitleRight>
          <WindowButton aria-label="アカウント"><Avatar /></WindowButton>
          <WindowButton aria-label="ヒント"><Bulb /></WindowButton>
          <WindowButton aria-label="最小化"><Minimize /></WindowButton>
          <WindowButton aria-label="最大化"><Maximize /></WindowButton>
          <WindowButton aria-label="閉じる"><Close /></WindowButton>
        </TitleRight>
      </TitleBar>

      <TabRow>
        {menuTabs.map((t) => <MenuTab key={t} $active={t === "表示"}>{t}</MenuTab>)}
        <TabActions>
          <Outlined><CommentGlyph />コメント</Outlined>
          <Filled><ShareGlyph />共有<Chevron w={7} color="#fff" /></Filled>
          <button aria-label="共同作業"><PersonTalk /></button>
        </TabActions>
      </TabRow>

      <Ribbon>
        <Group $w={273}>
          <SheetViews>
            <SelectWrap>
              <ViewSelect aria-label="シート ビュー" defaultValue="既定"><option>既定</option></ViewSelect>
              <Chevron w={7} />
            </SelectWrap>
            <SmallRow>
              <Small icon={<Floppy />} text="保持" off />
              <Small icon={<EyeExit />} text="終了" off />
              <Small icon={<EyeNew />} text="新規" />
              <Small icon={<Bullets />} text="オプション" off />
            </SmallRow>
          </SheetViews>
          <GroupTitle>シート ビュー</GroupTitle>
        </Group>
        <Group $w={231}>
          <GroupBody $pad={5}>
            <Big icon={<NormalView />} lines={["標準"]} w={48} />
            <Big icon={<PageBreak />} lines={["改ページ", "プレビュー"]} w={48} />
            <Big icon={<PageLayout />} lines={["ページ", "レイアウト"]} w={52} active />
            <Big icon={<CustomView />} lines={["ユーザー設定", "のビュー"]} w={72} />
          </GroupBody>
          <GroupTitle>ブックの表示</GroupTitle>
        </Group>
        <Group $w={196}>
          <GroupBody>
            <Big icon={<NavPane />} lines={["ナビゲー", "ション"]} w={46} />
            <Checks>
              <Check text="ルーラー" />
              <Check text="見出し" />
              <Check text="目盛線" />
              <span />
              <Check text="数式バー" />
            </Checks>
          </GroupBody>
          <GroupTitle>表示</GroupTitle>
        </Group>
        <Group $w={207}>
          <GroupBody>
            <Big icon={<Magnifier />} lines={["ズーム"]} w={44} />
            <Big icon={<Zoom100 />} lines={["100%"]} w={44} />
            <Big icon={<ZoomSelection />} lines={["選択範囲に合わせて", "拡大/縮小"]} w={106} />
          </GroupBody>
          <GroupTitle>ズーム</GroupTitle>
        </Group>
        <Group $w={542}>
          <GroupBody>
            <Big icon={<NewWindow />} lines={["新しいウィンドウ", "を開く"]} w={80} />
            <Big icon={<Arrange />} lines={["整列"]} w={46} />
            <Big icon={<Freeze />} lines={["ウィンドウ枠の", "固定"]} w={68} off menu />
            <SmallStack $w={96} $rule>
              <Small icon={<SplitWin />} text="分割" />
              <Small icon={<HideWin />} text="表示しない" />
              <Small icon={<ShowWin />} text="再表示" />
            </SmallStack>
            <SmallStack $w={174} $rule>
              <Small icon={<SideBySide />} text="並べて比較" off />
              <Small icon={<SyncScroll />} text="同時にスクロール" off />
              <Small icon={<ResetPos />} text="ウィンドウの位置を元に戻す" off />
            </SmallStack>
            <Big icon={<SwitchWin />} lines={["ウィンドウの", "切り替え"]} w={70} menu />
          </GroupBody>
          <GroupTitle>ウィンドウ</GroupTitle>
        </Group>
        <Group $w={58}>
          <GroupBody $pad={4}>
            <Big icon={<Macro />} lines={["マクロ", ""]} w={50} menu />
          </GroupBody>
          <GroupTitle>マクロ</GroupTitle>
        </Group>
        <Collapse aria-label="リボンを折りたたむ"><Chevron w={11} up /></Collapse>
      </Ribbon>

      <FormulaBar>
        <Field $w={198}>
          <FieldInput aria-label="名前ボックス" defaultValue="A1" />
          <Chevron w={11} />
        </Field>
        <DotGap><Dots /></DotGap>
        <Field $w={85}>
          <CancelX />
          <EnterCheck />
          <Fx>fx</Fx>
          <Chevron w={10} color="#9a9a9a" />
        </Field>
        <FormulaGap />
        <Field>
          <FieldInput $indent={5} aria-label="数式バー" defaultValue="在庫No" />
          <Chevron w={11} />
        </Field>
      </FormulaBar>

      <Workspace>
        <Canvas>
          <RulerRow>
            <CornerCell><Corner /></CornerCell>
            <HorizontalRuler />
          </RulerRow>
          <HeadRow>
            <HeadSet>
              {columns.map((c) => <Head key={c.id} $w={c.w} $active={c.id === "A"}>{c.id}</Head>)}
            </HeadSet>
            <HeadSet>
              {emptyColumns.map((id) => <Head key={id} $w={73}>{id}</Head>)}
            </HeadSet>
          </HeadRow>
          <Body>
            <Gutter>
              <VerticalRuler />
              <RowNumbers>
                <RowNumberTop $h={6} />
                {firstPage.map((r, i) => <RowNumber key={r[0]}>{33 + i}</RowNumber>)}
                <RowNumberGap />
                <RowNumberTop $h={1} />
                {secondPage.map((r, i) => <RowNumber key={r[0]}>{44 + i}</RowNumber>)}
              </RowNumbers>
            </Gutter>
            <PageColumn>
              <Page $first>
                <StockTable rows={firstPage} edge />
                <PageFooter>
                  <FooterMiddle>
                    1 / 7 ページ
                    <RedFrame />
                    <StepBadge>⑪</StepBadge>
                  </FooterMiddle>
                </PageFooter>
              </Page>
              <Page>
                <PageHeader>ヘッダーの追加</PageHeader>
                <StockTable rows={secondPage} />
              </Page>
            </PageColumn>
            <PageColumn>
              <Page $first $blank><BlankGrid $h={336} $shift={5} /></Page>
              <Page $blank>
                <PageHeader>ヘッダーの追加</PageHeader>
                <BlankGrid $h={300}>クリックしてデータを追加</BlankGrid>
              </Page>
            </PageColumn>
          </Body>
        </Canvas>
        <VScroll>
          <Triangle w={12} h={9} d="M6 1.5L10.5 7.5H1.5Z" />
          <VThumb />
          <Triangle w={12} h={9} d="M6 7.5L10.5 1.5H1.5Z" />
        </VScroll>
      </Workspace>

      <SheetBar>
        <SheetNav aria-label="前のシート"><NavArrow /></SheetNav>
        <SheetNav aria-label="次のシート"><NavArrow flip /></SheetNav>
        <SheetTab><TabUnderline>Sheet1</TabUnderline></SheetTab>
        <TabRule />
        <button aria-label="新しいシート"><Plus /></button>
        <Spacer />
        <Dots />
        <HScroll>
          <Triangle w={9} h={12} d="M1.5 6L7.5 1.5V10.5Z" />
          <HThumb />
          <Triangle w={9} h={12} d="M7.5 6L1.5 1.5V10.5Z" />
        </HScroll>
      </SheetBar>

      <StatusBar>
        <span>準備完了</span>
        <MacroRecord />
        <span>ページ: 1/7</span>
        <StatusRight>
          <StatusButton aria-label="標準"><StatusGrid /></StatusButton>
          <StatusButton $active aria-label="ページ レイアウト"><StatusPage /></StatusButton>
          <StatusButton aria-label="改ページ プレビュー"><StatusBreak /></StatusButton>
          <ZoomStep>−</ZoomStep>
          <ZoomRange type="range" min={0} max={200} defaultValue={100} aria-label="ズーム" />
          <ZoomStep>+</ZoomStep>
          <ZoomValue>100%</ZoomValue>
        </StatusRight>
      </StatusBar>
    </Window>
  );
}
